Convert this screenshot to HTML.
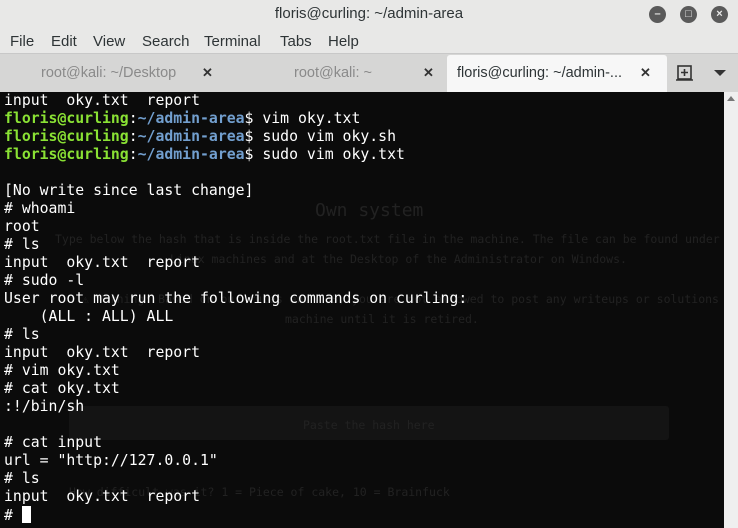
<!DOCTYPE html>
<html><head><style>
*{margin:0;padding:0;box-sizing:border-box}
body{width:738px;height:528px;overflow:hidden;background:#000;font-family:"Liberation Sans",sans-serif;position:relative}
#title{position:absolute;left:0;top:0;width:738px;height:30px;background:#e8e8e7;text-align:center;font-size:15px;line-height:28px;color:#2e3436}
.wb{position:absolute;top:6px;width:17px;height:17px;border-radius:50%;background:#5a5a5a;color:#e8e8e7;font-size:11px;line-height:17px;text-align:center;font-weight:bold}
#menu{position:absolute;left:0;top:30px;width:738px;height:23px;background:#e8e8e7;font-size:15px;color:#2e3436}
#menu span{position:absolute;top:3px}
#tabs{position:absolute;left:0;top:53px;width:738px;height:39px;background:#d6d6d5;border-top:1px solid #c8c8c8}
.tab{position:absolute;top:11px;font-size:14.5px;color:#8a8a8a}
.x{position:absolute;top:11px;font-size:13px;font-weight:bold;color:#333}
#active{position:absolute;left:447px;top:1px;width:220px;height:38px;background:#f7f7f7;border-radius:3px 3px 0 0}
#term{position:absolute;left:0;top:92px;width:724px;height:436px;background:#0b0b0b;overflow:hidden}
#sb{position:absolute;left:724px;top:92px;width:14px;height:436px;background:#efefef}
pre{position:absolute;left:4px;top:0;font-family:"DejaVu Sans Mono","Liberation Mono",monospace;font-size:14.8px;line-height:18px;color:#fff}
.g{color:#8ae234;font-weight:bold}.b{color:#729fcf;font-weight:bold}
.ghost{position:absolute;font-family:"DejaVu Sans Mono",monospace;color:#222;font-size:11.5px;white-space:nowrap}
.cur{display:inline-block;width:9px;height:17px;background:#fff;vertical-align:-3px}
</style></head><body>
<div id="title">floris@curling: ~/admin-area
<div class="wb" style="left:649px">–</div><div class="wb" style="left:680px">□</div><div class="wb" style="left:711px">×</div></div>
<div id="menu"><span style="left:10px">File</span><span style="left:51px">Edit</span><span style="left:93px">View</span><span style="left:142px">Search</span><span style="left:204px">Terminal</span><span style="left:280px">Tabs</span><span style="left:328px">Help</span></div>
<div id="tabs">
<div id="active"></div>
<span class="tab" style="left:41px">root@kali: ~/Desktop</span><span class="x" style="left:202px">✕</span>
<span class="tab" style="left:294px">root@kali: ~</span><span class="x" style="left:423px">✕</span>
<span class="tab" style="left:457px;color:#2e3436">floris@curling: ~/admin-...</span><span class="x" style="left:640px">✕</span>
<svg style="position:absolute;left:676px;top:10px" width="18" height="18"><rect x="2" y="2" width="13" height="13" fill="none" stroke="#333" stroke-width="1.6"/><line x1="0" y1="16" x2="17" y2="16" stroke="#333" stroke-width="1.6"/><path d="M8.5 5v7M5 8.5h7" stroke="#333" stroke-width="1.6"/></svg>
<svg style="position:absolute;left:714px;top:16px" width="12" height="7"><path d="M0 0h12L6 6z" fill="#333"/></svg>
</div>
<div id="term">
<div class="ghost" style="left:315px;top:108px;font-size:18px">Own system</div>
<div class="ghost" style="left:55px;top:140px">Type below the hash that is inside the root.txt file in the machine. The file can be found under /root on</div>
<div class="ghost" style="left:170px;top:160px">Linux machines and at the Desktop of the Administrator on Windows.</div>
<div class="ghost" style="left:82px;top:200px">⚠ Warning: Based on our rules and ToS, you are not allowed to post any writeups or solutions for this</div>
<div class="ghost" style="left:285px;top:220px">machine until it is retired.</div>
<div style="position:absolute;left:69px;top:314px;width:600px;height:34px;background:#141414;border-radius:3px"></div>
<div class="ghost" style="left:303px;top:326px">Paste the hash here</div>
<div class="ghost" style="left:69px;top:393px">How difficult was it? 1 = Piece of cake, 10 = Brainfuck</div>
<pre>input  oky.txt  report
<span class="g">floris@curling</span>:<span class="b">~/admin-area</span>$ vim oky.txt
<span class="g">floris@curling</span>:<span class="b">~/admin-area</span>$ sudo vim oky.sh
<span class="g">floris@curling</span>:<span class="b">~/admin-area</span>$ sudo vim oky.txt

[No write since last change]
# whoami
root
# ls
input  oky.txt  report
# sudo -l
User root may run the following commands on curling:
    (ALL : ALL) ALL
# ls
input  oky.txt  report
# vim oky.txt
# cat oky.txt
:!/bin/sh

# cat input
url = "http://127.0.0.1"
# ls
input  oky.txt  report
# <span class="cur"></span></pre>
</div>
<div id="sb"><svg style="position:absolute;left:3px;top:4px" width="9" height="6"><path d="M0 5h8L4 0z" fill="#777"/></svg></div>
</body></html>
